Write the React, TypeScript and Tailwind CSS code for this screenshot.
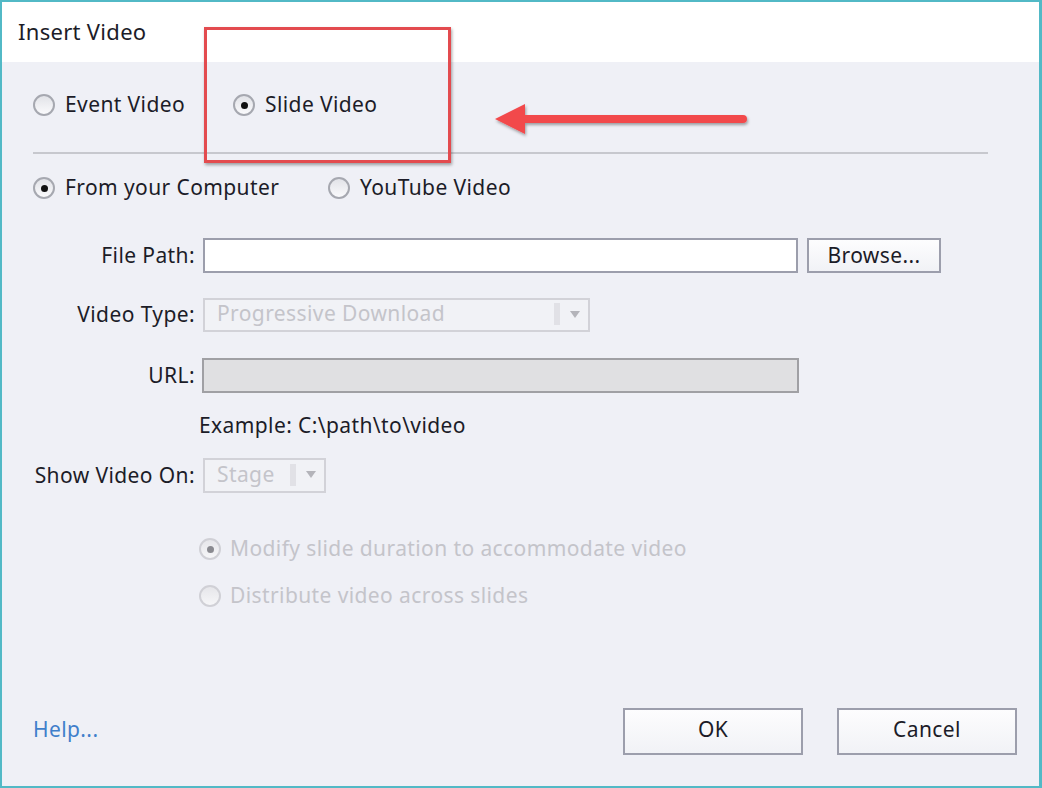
import React from "react";

const font = { fontFamily: '"Noto Sans", "Open Sans", sans-serif' };

function Radio({ checked, disabled }: { checked?: boolean; disabled?: boolean }) {
  return (
    <span
      className={
        "relative inline-flex h-[22px] w-[22px] shrink-0 items-center justify-center rounded-full border-2 " +
        (disabled
          ? "border-[#d0d0d6] bg-gradient-to-b from-[#e6e6ea] to-[#f6f6f8]"
          : "border-[#a6a8b0] bg-gradient-to-b from-[#e2e3e8] to-[#fafafc]")
      }
    >
      {checked && (
        <span
          className={
            "h-[7px] w-[7px] rounded-full " + (disabled ? "bg-[#8a8a90]" : "bg-[#111]")
          }
        />
      )}
    </span>
  );
}

function Arrow() {
  return (
    <svg width="10" height="7" viewBox="0 0 10 7">
      <path d="M0 0 L10 0 L5 7 Z" fill="#b4b4ba" />
    </svg>
  );
}

export default function App() {
  return (
    <div
      className="relative flex h-[788px] w-[1042px] flex-col border-2 border-r-[3px] border-[#52b9c6] text-[21px] tracking-[0.4px] text-[#1c1c28]"
      style={font}
    >
      {/* title bar */}
      <div className="flex h-[60px] items-center bg-white pb-[2px] pl-[16px] text-[22px] tracking-[0.3px]">
        Insert Video
      </div>

      {/* body */}
      <div className="flex flex-1 flex-col bg-[#eff0f6] pb-[31px] pl-[31px] pr-[22px]">
        <div className="mt-[26px] flex h-[34px] items-center">
          <label className="flex w-[200px] items-center gap-[10px]">
            <Radio />
            <span>Event Video</span>
          </label>
          <label className="flex items-center gap-[10px]">
            <Radio checked />
            <span>Slide Video</span>
          </label>
        </div>

        <div className="mt-[30px] h-[2px] w-[955px] bg-[#c7c8ce]" />

        <div className="mt-[17px] flex h-[34px] items-center">
          <label className="flex w-[295px] items-center gap-[10px]">
            <Radio checked />
            <span>From your Computer</span>
          </label>
          <label className="flex items-center gap-[10px]">
            <Radio />
            <span>YouTube Video</span>
          </label>
        </div>

        <div className="mt-[33px] flex h-[35px] items-center">
          <span className="w-[162px] text-right">File Path:</span>
          <div className="ml-[8px] h-[35px] w-[595px] border-2 border-[#9c9eac] bg-white" />
          <button className="ml-[9px] h-[35px] w-[134px] border-2 border-[#9c9eac] bg-gradient-to-b from-[#fdfdfe] to-[#f1f2f6] pb-[2px]">
            Browse...
          </button>
        </div>

        <div className="mt-[25px] flex h-[34px] items-center">
          <span className="w-[162px] text-right">Video Type:</span>
          <div className="ml-[8px] flex h-[34px] w-[387px] items-center border-2 border-[#d2d2d8] bg-[#f1f2f6] pb-[2px] pl-[12px] pr-[8px] text-[#c4c4ca]">
            <span className="flex-1">Progressive Download</span>
            <span className="mr-[10px] h-[22px] w-[6px] bg-[#e1e1e6]" />
            <Arrow />
          </div>
        </div>

        <div className="mt-[26px] flex h-[35px] items-center">
          <span className="w-[162px] text-right">URL:</span>
          <div className="ml-[7px] h-[35px] w-[597px] border-2 border-[#a0a0a4] bg-[#e0e0e2]" />
        </div>

        <div className="mt-[19px] flex h-[28px] items-center pl-[166px]">
          Example: C:\path\to\video
        </div>

        <div className="mt-[18px] flex h-[35px] items-center">
          <span className="w-[162px] text-right">Show Video On:</span>
          <div className="ml-[8px] flex h-[35px] w-[123px] items-center border-2 border-[#d2d2d8] bg-[#f1f2f6] pb-[2px] pl-[12px] pr-[8px] text-[#c4c4ca]">
            <span className="flex-1">Stage</span>
            <span className="mr-[10px] h-[22px] w-[6px] bg-[#e1e1e6]" />
            <Arrow />
          </div>
        </div>

        <div className="mt-[41px] flex h-[30px] items-center pl-[166px] text-[#c4c4ca]">
          <label className="flex items-center gap-[9px]">
            <Radio checked disabled />
            <span>Modify slide duration to accommodate video</span>
          </label>
        </div>
        <div className="mt-[17px] flex h-[30px] items-center pl-[166px] text-[#c4c4ca]">
          <label className="flex items-center gap-[9px]">
            <Radio disabled />
            <span>Distribute video across slides</span>
          </label>
        </div>

        <div className="mt-auto flex h-[47px] items-center">
          <span className="flex-1 pb-[4px] text-[#3f7fcb]">Help...</span>
          <button className="h-[47px] w-[180px] border-2 border-[#9c9eac] bg-gradient-to-b from-[#fdfdfe] to-[#f1f2f6] pb-[4px]">
            OK
          </button>
          <button className="ml-[34px] h-[47px] w-[180px] border-2 border-[#9c9eac] bg-gradient-to-b from-[#fdfdfe] to-[#f1f2f6] pb-[4px]">
            Cancel
          </button>
        </div>
      </div>

      {/* annotation: red box */}
      <div className="pointer-events-none absolute left-[202px] top-[25px] h-[136px] w-[247px] border-[3px] border-[#e34b4f] shadow-[1px_2px_3px_rgba(0,0,0,0.35)]" />

      {/* annotation: arrow */}
      <svg
        className="pointer-events-none absolute left-[488px] top-[96px]"
        width="270"
        height="46"
        viewBox="0 0 270 46"
      >
        <defs>
          <filter id="sh" x="-10%" y="-50%" width="120%" height="200%">
            <feDropShadow dx="1" dy="2" stdDeviation="1.5" floodColor="#000" floodOpacity="0.35" />
          </filter>
        </defs>
        <g filter="url(#sh)">
          <line x1="30" y1="21" x2="253" y2="21" stroke="#f2494b" strokeWidth="8" strokeLinecap="round" />
          <path d="M5 21 L35 6 L35 36 Z" fill="#f2494b" />
        </g>
      </svg>
    </div>
  );
}
